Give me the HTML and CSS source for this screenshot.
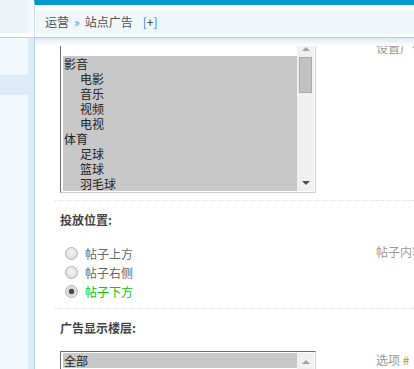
FILE: index.html
```html
<!DOCTYPE html>
<html lang="zh-CN">
<head>
    <meta charset="UTF-8">
    <title>站点广告</title>
    <link rel="stylesheet" href="styles.css">
</head>
<body>
<div class="top">
  <div class="logo"></div>
  <div class="nav">
    <div class="crumb">运营<em>&raquo;</em>站点广告<a class="add"><span>[</span>+<span>]</span></a></div>
  </div>
</div>
<div class="wrap">
  <div class="side">
    <div class="item on"></div>
  </div>
  <div class="main">
    <table class="tb">
      <colgroup><col class="c1"><col></colgroup>
      <tr>
        <td class="rowform first">
          <div class="sel">
            <div class="opts">
              <div class="opt blank"></div>
              <div class="opt on">影音</div>
              <div class="opt on sub">电影</div>
              <div class="opt on sub">音乐</div>
              <div class="opt on sub">视频</div>
              <div class="opt on sub">电视</div>
              <div class="opt on">体育</div>
              <div class="opt on sub">足球</div>
              <div class="opt on sub">篮球</div>
              <div class="opt on sub">羽毛球</div>
            </div>
            <div class="sbar">
              <div class="btn"><i class="up"></i></div>
              <div class="thumb"></div>
              <div class="track"></div>
              <div class="btn"><i class="down"></i></div>
            </div>
          </div>
        </td>
        <td class="tips first">设置广告投放的版块范围</td>
      </tr>
      <tr><td colspan="2" class="title">投放位置:</td></tr>
      <tr>
        <td class="rowform radio-row">
          <ul class="radios">
            <li><input type="radio" name="pos">帖子上方</li>
            <li><input type="radio" name="pos">帖子右侧</li>
            <li class="on"><input type="radio" name="pos" checked>帖子下方</li>
          </ul>
        </td>
        <td class="tips">帖子内容的上方、右侧或下方</td>
      </tr>
      <tr><td colspan="2" class="title">广告显示楼层:</td></tr>
      <tr>
        <td class="rowform sel-row">
          <div class="sel short">
            <div class="opts">
              <div class="opt on">全部</div>
            </div>
            <div class="sbar">
              <div class="btn"><i class="up"></i></div>
              <div class="thumb"></div>
              <div class="track"></div>
            </div>
          </div>
        </td>
        <td class="tips">选项 <span class="hash">#</span></td>
      </tr>
    </table>
  </div>
</div>
</body>
</html>
```

FILE: styles.css
```css
html, body {
  margin: 0;
  height: 100%;
}

body {
  display: flex;
  flex-direction: column;
  overflow: hidden;
  background: #fff;
  color: #333;
  font: 12px/15px "Noto Sans CJK SC", "Liberation Sans", sans-serif;
}

/* header */
.top {
  display: flex;
  flex-shrink: 0;
  height: 37px;
  border-bottom: 1px solid #b8cfda;
}

.logo {
  width: 28px;
  height: 33px;
  background: #ecf3f9;
  border-right: 6px solid #f5f9fc;
}

.nav {
  flex: 1;
  border-top: 5px solid #0099cc;
  border-left: 1px solid #cddfe8;
  padding: 5px 0 3px 1px;
  background: #fafcfd;
}

.crumb {
  height: 24px;
  padding-left: 9px;
  background: #eff7fb;
  color: #4f4f4f;
  font-size: 12px;
  line-height: 24px;
}

.crumb em {
  font-style: normal;
  color: #6d94b8;
  margin: 0 5px;
}

.add {
  margin-left: 10px;
  color: #333;
}

.add span {
  color: #3a7fc0;
}

/* body */
.wrap {
  flex: 1;
  display: flex;
  min-height: 0;
}

.side {
  width: 28px;
  background: #f2f9fd;
  border-right: 6px solid #dcecf7;
}

.side .on {
  margin-top: 37px;
  height: 20px;
  background: #dcebf7;
}

.main {
  flex: 1;
  position: relative;
  overflow: hidden;
  border-left: 1px solid #b7d0dd;
}

.main::before {
  content: "";
  position: absolute;
  top: 0;
  left: 0;
  right: 0;
  height: 8px;
  background: linear-gradient(#dde9f0, #fff);
  z-index: 1;
}

.tb {
  table-layout: fixed;
  border-collapse: collapse;
  width: 359px;
  margin-left: 20px;
}

.tb .c1 {
  width: 321px;
}

.tb td {
  padding: 0;
  vertical-align: top;
}

.tb .rowform {
  padding-left: 5px;
}

.tb .rowform.first {
  padding-bottom: 7px;
}

.tb .radio-row {
  padding-top: 11px;
  padding-bottom: 7px;
}

.tb .sel-row {
  padding-top: 10px;
}

.tb .title {
  border-top: 1px dotted #cfe2ec;
  padding: 11px 0 6px 5px;
  font-weight: bold;
  color: #444;
}

.tb .tips {
  padding-top: 11px;
  color: #999;
  white-space: nowrap;
}

.tb .tips.first {
  padding-top: 2px;
}

/* fake multi select */
.sel {
  display: flex;
  width: 256px;
  box-sizing: border-box;
  border: 1px solid #cfcfcf;
  border-left-color: #6d6d6d;
  border-top-color: #6d6d6d;
  padding: 1px 1px 1px 2px;
  background: #fff;
}

.sel.short {
  height: 60px;
}

.opts {
  flex: 1;
  color: #222;
}

.opt {
  height: 15px;
  padding-left: 1px;
}

.opt.blank {
  height: 16px;
}

.opt.on {
  background: #c8c8c8;
}

.opt.sub {
  padding-left: 17px;
}

.sbar {
  width: 17px;
  display: flex;
  flex-direction: column;
  background: #f0f0f0;
}

.sbar .btn {
  height: 17px;
  display: flex;
  align-items: center;
  justify-content: center;
}

.sbar .track {
  flex: 1;
}

.sbar .thumb {
  height: 36px;
  margin: 0 2px;
  box-sizing: border-box;
  border: 1px solid #a9a9a9;
  background: #c2c2c2;
}

.up {
  border-left: 4px solid transparent;
  border-right: 4px solid transparent;
  border-bottom: 4px solid #a3a3a3;
}

.down {
  border-left: 4px solid transparent;
  border-right: 4px solid transparent;
  border-top: 4px solid #505050;
}

/* radios */
.radios {
  list-style: none;
  margin: 0;
  padding: 0;
}

.radios li {
  height: 19px;
  display: flex;
  align-items: center;
  color: #666;
}

.radios li.on {
  color: #00cc00;
}

.radios input {
  -webkit-appearance: none;
  appearance: none;
  width: 13px;
  height: 13px;
  margin: 0 7px 0 5px;
  box-sizing: border-box;
  border: 1px solid #b3b3b3;
  border-radius: 50%;
  background: radial-gradient(circle at 50% 40%, #f4f4f4, #d5d5d5);
}

.radios input:checked {
  background: radial-gradient(circle, #4a4a4a 0 2.5px, #d4d4d4 3px, #e8e8e8 6px);
}

.hash {
  color: #b0925a;
}
```
